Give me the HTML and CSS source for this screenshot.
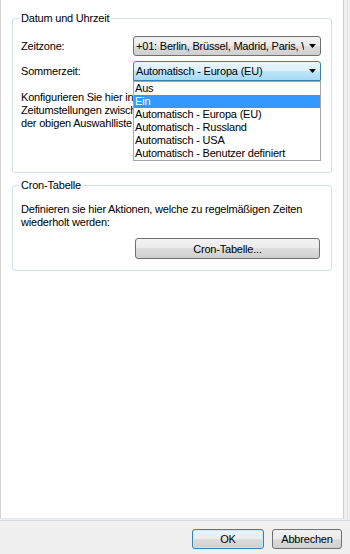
FILE: index.html
```html
<!DOCTYPE html>
<html lang="de">
<head>
    <meta charset="UTF-8">
    <title>Datum und Uhrzeit</title>
    <link rel="stylesheet" href="styles.css">
</head>
<body>
    <div class="window">
        <div class="main">
            <div class="panel">
                <fieldset class="group first">
                    <legend>Datum und Uhrzeit</legend>
                    <div class="row">
                        <label class="label">Zeitzone:</label>
                        <div class="combo">
                            <span class="combo-text">+01: Berlin, Brüssel, Madrid, Paris, Wien</span>
                            <span class="arrow"><svg width="7" height="4" viewBox="0 0 7 4"><path d="M0 0H7L3.5 4Z" fill="#000"/></svg></span>
                        </div>
                    </div>
                    <div class="row second">
                        <label class="label">Sommerzeit:</label>
                        <div class="combo open">
                            <span class="combo-text">Automatisch - Europa (EU)</span>
                            <span class="arrow"><svg width="7" height="4" viewBox="0 0 7 4"><path d="M0 0H7L3.5 4Z" fill="#000"/></svg></span>
                            <ul class="list">
                                <li>Aus</li>
                                <li class="hover">Ein</li>
                                <li>Automatisch - Europa (EU)</li>
                                <li>Automatisch - Russland</li>
                                <li>Automatisch - USA</li>
                                <li>Automatisch - Benutzer definiert</li>
                            </ul>
                        </div>
                    </div>
                    <p class="info covered">
                        Konfigurieren Sie hier in welcher Form<br>
                        Zeitumstellungen zwischen Sommer- und<br>
                        der obigen Auswahlliste erfolgen sollen.
                    </p>
                </fieldset>

                <fieldset class="group cron">
                    <legend>Cron-Tabelle</legend>
                    <p class="info">
                        Definieren sie hier Aktionen, welche zu regelmäßigen Zeiten<br>
                        wiederholt werden:
                    </p>
                    <button type="button" class="btn cron-btn">Cron-Tabelle...</button>
                </fieldset>
            </div>
            <div class="side"></div>
        </div>
        <div class="footer">
            <button type="button" class="btn default">OK</button>
            <button type="button" class="btn cancel">Abbrechen</button>
        </div>
    </div>
</body>
</html>
```

FILE: styles.css
```css
body {
    margin: 0;
    font-family: "Liberation Sans", Arial, sans-serif;
    font-size: 11px;
    letter-spacing: -0.2px;
    color: #000000;
    background-color: #f0f0f0;
}
.window {
    width: 350px;
    height: 554px;
    display: flex;
    flex-direction: column;
}
.main {
    display: flex;
    height: 520px;
}
.panel {
    width: 344px;
    height: 519px;
    box-sizing: border-box;
    padding-top: 12px;
    background-color: #ffffff;
    border-left: 1px solid #d4d4d4;
    border-right: 1px solid #cfcfcf;
    border-bottom: 1px solid #e6e6e6;
}
.side {
    width: 3px;
    height: 519px;
    border-right: 1px solid #e2e2e2;
}
.group {
    margin: 0 11px;
    padding: 0 8px;
    border: 1px solid #d5dfe5;
    border-radius: 3px;
}
.group legend {
    padding: 0 2px;
    margin-left: -2px;
    line-height: 13px;
}
.group.first {
    padding-bottom: 42px;
}
.group.cron {
    margin-top: 6px;
    padding-bottom: 11px;
}
.row {
    display: flex;
    align-items: center;
    height: 20px;
    margin-top: 11px;
}
.row.second {
    margin-top: 5px;
}
.label {
    width: 112px;
}
.combo {
    position: relative;
    display: flex;
    align-items: center;
    width: 188px;
    height: 20px;
    box-sizing: border-box;
    border: 1px solid #707070;
    border-radius: 3px;
    background: linear-gradient(#f2f2f2 0%, #ebebeb 50%, #dddddd 50%, #cfcfcf 100%);
}
.combo.open {
    border-color: #3c7fb1;
    border-radius: 3px 3px 0 0;
    background: linear-gradient(#eaf6fd 0%, #d9f0fc 50%, #bee6fd 50%, #a7d9f5 100%);
}
.combo-text {
    flex: 1;
    padding-left: 2px;
    white-space: nowrap;
    overflow: hidden;
    line-height: 18px;
}
.arrow {
    width: 16px;
    display: flex;
    justify-content: center;
    align-items: center;
}
.list {
    position: absolute;
    top: 19px;
    left: -1px;
    width: 188px;
    box-sizing: border-box;
    margin: 0;
    padding: 0;
    list-style: none;
    background-color: #ffffff;
    border: 1px solid #a5a5a5;
}
.list li {
    height: 13px;
    line-height: 13px;
    padding-left: 1px;
    white-space: nowrap;
}
.list li.hover {
    background-color: #3399ff;
    color: #ffffff;
}
.info {
    margin: 10px 0 0 0;
    line-height: 13px;
    white-space: nowrap;
}
.info.covered {
    width: 112px;
    overflow: hidden;
}
.cron .info {
    margin-top: 11px;
}
.btn {
    height: 21px;
    box-sizing: border-box;
    padding: 0;
    font-family: inherit;
    font-size: 11px;
    letter-spacing: -0.2px;
    color: #000000;
    border: 1px solid #707070;
    border-radius: 3px;
    background: linear-gradient(#f2f2f2 0%, #ebebeb 50%, #dddddd 50%, #cfcfcf 100%);
}
.cron-btn {
    display: block;
    width: 185px;
    margin: 9px 0 0 114px;
}
.footer {
    flex: 1;
    display: flex;
    justify-content: flex-end;
    gap: 8px;
    padding: 8px 8px 0 0;
    border-top: 1px solid #d5dae0;
}
.footer .btn {
    height: 20px;
}
.btn.default {
    width: 72px;
    border-color: #3c7fb1;
    box-shadow: inset 0 0 0 1px #c6e7f8;
}
.btn.cancel {
    width: 70px;
}
```
